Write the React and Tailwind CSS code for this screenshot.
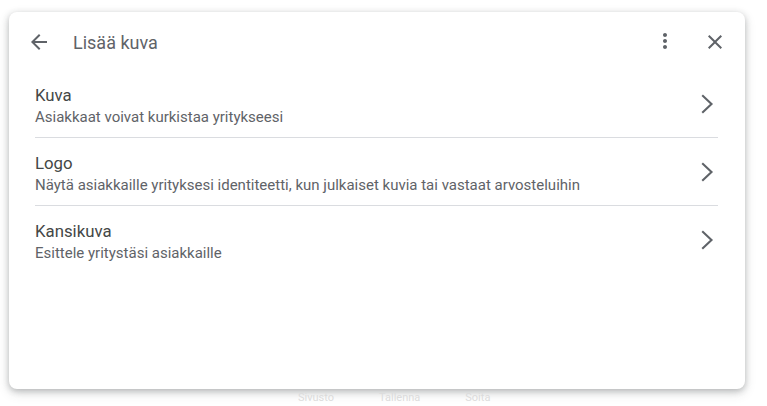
import React from "react";

function ArrowBack() {
  return (
    <svg width="24" height="24" viewBox="0 0 24 24" fill="#5f6368">
      <path d="M20 11H7.83l5.59-5.59L12 4l-8 8 8 8 1.41-1.41L7.83 13H20v-2z" />
    </svg>
  );
}
function MoreVert() {
  return (
    <svg width="24" height="24" viewBox="0 0 24 24" fill="#5f6368">
      <path d="M12 8c1.1 0 2-.9 2-2s-.9-2-2-2-2 .9-2 2 .9 2 2 2zm0 2c-1.1 0-2 .9-2 2s.9 2 2 2 2-.9 2-2-.9-2-2-2zm0 6c-1.1 0-2 .9-2 2s.9 2 2 2 2-.9 2-2-.9-2-2-2z" />
    </svg>
  );
}
function CloseIcon() {
  return (
    <svg width="24" height="24" viewBox="0 0 24 24" fill="#5f6368">
      <path d="M19 6.41L17.59 5 12 10.59 6.41 5 5 6.41 10.59 12 5 17.59 6.41 19 12 13.41 17.59 19 19 17.59 13.41 12z" />
    </svg>
  );
}
function Chevron() {
  return (
    <svg width="14" height="20" viewBox="0 0 14 20" fill="none">
      <path d="M3 2l8.5 8L3 18" stroke="#5f6368" strokeWidth="2.1" strokeLinecap="square" strokeLinejoin="miter" />
    </svg>
  );
}

const rows = [
  { title: "Kuva", sub: "Asiakkaat voivat kurkistaa yritykseesi" },
  {
    title: "Logo",
    sub: "Näytä asiakkaille yrityksesi identiteetti, kun julkaiset kuvia tai vastaat arvosteluihin",
  },
  { title: "Kansikuva", sub: "Esittele yritystäsi asiakkaille" },
];

export default function App() {
  return (
    <div
      className="relative w-[767px] h-[406px] bg-white overflow-hidden"
      style={{ fontFamily: "Roboto, 'Noto Sans', sans-serif" }}
    >
      <div className="pt-[12px] pl-[9px]">
        <div className="w-[736px] h-[377px] bg-white rounded-[8px] shadow-[0_2px_6px_rgba(60,64,67,0.3),0_4px_12px_rgba(60,64,67,0.15)] flex flex-col">
          <div className="h-[58px] flex items-center pl-[18px] pr-[12px] pt-[2px]">
            <div className="w-[24px] h-[24px]">
              <ArrowBack />
            </div>
            <div className="ml-[22px] text-[18px] text-[#5f6368] flex-1">Lisää kuva</div>
            <div className="w-[24px] h-[24px] mr-[26px] mt-[-3px]">
              <MoreVert />
            </div>
            <div className="w-[24px] h-[24px] mr-[6px]">
              <CloseIcon />
            </div>
          </div>
          <div className="pl-[26px] pr-[27px] flex flex-col">
            {rows.map((r, i) => (
              <div
                key={i}
                className={
                  "h-[68px] flex items-start pt-[14px] " +
                  (i < rows.length - 1 ? "border-b border-[#dadce0]" : "")
                }
              >
                <div className="flex-1 flex flex-col">
                  <div className="text-[16.8px] leading-[22px] text-[#444746]">{r.title}</div>
                  <div className="text-[15px] leading-[22px] text-[#5f6368]">{r.sub}</div>
                </div>
                <div className="w-[14px] h-[20px] mt-[10px] mr-[4px]">
                  <Chevron />
                </div>
              </div>
            ))}
          </div>
        </div>
      </div>
      <div className="flex text-[11px] text-[#dcdcdc] pl-[298px] gap-[45px] mt-[1px]">
        <span>Sivusto</span>
        <span>Tallenna</span>
        <span>Soita</span>
      </div>
    </div>
  );
}
